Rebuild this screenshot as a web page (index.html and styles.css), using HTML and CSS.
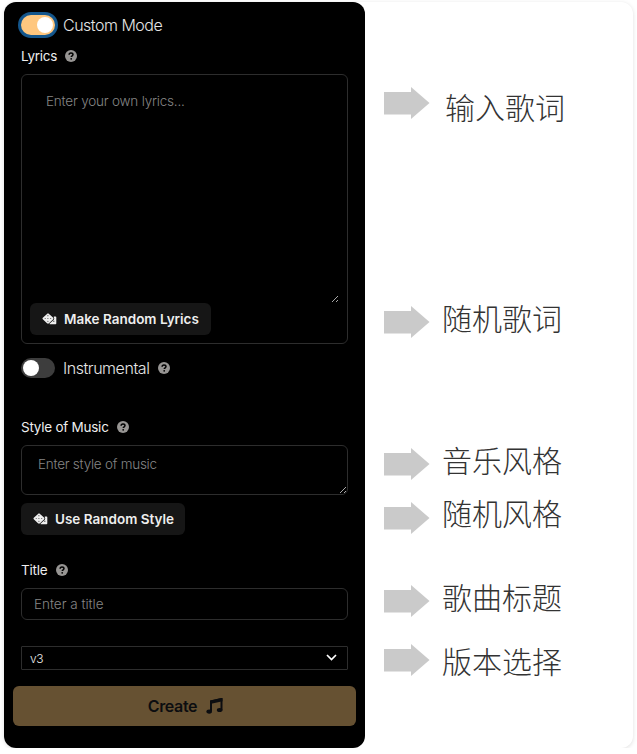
FILE: index.html
```html
<!DOCTYPE html>
<html lang="zh-CN">
<head>
<meta charset="utf-8">
<title>Custom Mode</title>
<link rel="stylesheet" href="styles.css">
</head>
<body>
<svg width="0" height="0" class="defs">
  <symbol id="help" viewBox="0 0 12 12"><circle cx="6" cy="6" r="6" fill="#979593"/><path d="M4.1 4.7C4.1 3.4 5 2.9 6 2.9c1.200 0 2 .7 2 1.700C8 5.800 6.200 5.800 6.200 7.100" fill="none" stroke="#000" stroke-width="1.500"/><circle cx="6.200" cy="8.800" r=".9"/></symbol>
  <symbol id="dice" viewBox="0 0 15 12"><path d="M5.300.7Q6 0 6.700.7L11 4.500Q12 5.500 11 6.500L7 10.300Q6 11.200 5 10.300L.8 6.300Q0 5.500.8 4.700z" fill="#eee"/><path d="M11.800 3.500H13.500Q14.300 3.500 14.300 4.300V10.500Q14.300 11.300 13.500 11.300H8.300Q7.500 11.300 7.500 10.700L11.800 6.700Q12.800 5.500 11.800 4.500z" fill="#eee"/><g fill="#555"><circle cx="5.900" cy="2.700" r=".6"/><circle cx="3.200" cy="5.500" r=".6"/><circle cx="5.900" cy="5.500" r=".6"/><circle cx="8.700" cy="5.500" r=".6"/><circle cx="5.900" cy="8.300" r=".6"/><circle cx="11.800" cy="8.300" r=".7"/></g></symbol>
  <symbol id="arrow" viewBox="0 0 46 32"><path d="M0 5h27V0l18.500 16L27 32v-4.500H0z" fill="#cacaca"/></symbol>
  <symbol id="grip" viewBox="0 0 8 8"><path d="M1 7 7 1M5 7l2-2" stroke="#bbb" stroke-width=".9"/></symbol>
</svg>
<main class="card">
  <section class="panel">
    <div class="switch-row">
      <span class="switch switch-on"><i></i></span><span class="mode t-custom">Custom Mode</span>
    </div>
    <div class="label label-lyrics"><span class="t-lyrics">Lyrics</span><svg class="help"><use href="#help"/></svg></div>
    <div class="lyrics-box">
      <div class="lyrics-input"><span class="t-enter">Enter your own lyrics...</span><svg class="grip"><use href="#grip"/></svg></div>
      <div class="random random-lyrics"><svg class="dice"><use href="#dice"/></svg><span class="t-make">Make Random Lyrics</span></div>
    </div>
    <div class="switch-row instrumental">
      <span class="switch"><i></i></span><span class="mode t-instrumental">Instrumental</span><svg class="help"><use href="#help"/></svg>
    </div>
    <div class="label label-style"><span class="t-style">Style of Music</span><svg class="help"><use href="#help"/></svg></div>
    <div class="style-input"><span class="t-enter-style">Enter style of music</span><svg class="grip"><use href="#grip"/></svg></div>
    <div class="random random-style"><svg class="dice"><use href="#dice"/></svg><span class="t-use">Use Random Style</span></div>
    <div class="label label-title"><span class="t-title">Title</span><svg class="help"><use href="#help"/></svg></div>
    <div class="title-input"><span class="t-enter-title">Enter a title</span></div>
    <div class="version"><span class="t-version">v3</span><svg width="11" height="7" viewBox="0 0 11 7"><path d="m1 1 4.500 4.500L10 1" fill="none" stroke="#fff" stroke-width="1.700"/></svg></div>
    <div class="create"><span class="t-create">Create</span><svg width="17" height="16" viewBox="0 0 17 16"><path d="M5 13V3.200L15.500 1v11.500" fill="none" stroke="#0c0d10" stroke-width="2"/><path d="M4 3.300Q4 2.600 4.800 2.400L15.500.1Q16.500 0 16.500.8V3.200L4 6z" fill="#0c0d10"/><ellipse cx="3.200" cy="13.600" rx="2.800" ry="2.100" fill="#0c0d10"/><ellipse cx="13.600" cy="12" rx="2.800" ry="2.100" fill="#0c0d10"/></svg></div>
  </section>
  <section class="notes">
    <div class="note n1"><svg class="arrow"><use href="#arrow"/></svg><span>输入歌词</span></div>
    <div class="note n2"><svg class="arrow"><use href="#arrow"/></svg><span>随机歌词</span></div>
    <div class="note n3"><svg class="arrow"><use href="#arrow"/></svg><span>音乐风格</span></div>
    <div class="note n4"><svg class="arrow"><use href="#arrow"/></svg><span>随机风格</span></div>
    <div class="note n5"><svg class="arrow"><use href="#arrow"/></svg><span>歌曲标题</span></div>
    <div class="note n6"><svg class="arrow"><use href="#arrow"/></svg><span>版本选择</span></div>
  </section>
</main>
</body>
</html>
```
FILE: styles.css
```css
* { box-sizing: border-box; }
body { margin: 0; background: #fff; font-family: Inter, "Liberation Sans", sans-serif; overflow: hidden; }
span { white-space: nowrap; }
svg { flex: none; }
.defs { position: absolute; }
.card { display: flex; width: 629px; height: 746px; margin: 2px 0 0 4px; border-radius: 12px; background: #fff; box-shadow: 0 1px 4px rgba(0,0,0,.13); }
.panel { width: 361px; height: 746px; padding: 12px 17px 0; background: #000; border-radius: 12px; color: #eee; font-size: 13.5px; }
.switch-row { display: flex; align-items: center; height: 22px; }
.switch { display: flex; align-items: center; width: 34px; height: 20px; padding: 0 2px; border-radius: 10px; background: #3d3d3d; margin-right: 8px; }
.switch i { width: 16px; height: 16px; border-radius: 50%; background: #fff; }
.switch-on { background: #ffc77f; justify-content: flex-end; padding-right: 2px; box-shadow: 0 0 0 3px #14568c; }
.mode { font-size: 16px; font-weight: 300; line-height: 22px; color: #e5e5e5; }
.t-custom { letter-spacing: -.5px; }
.t-instrumental { letter-spacing: -.45px; }
.t-lyrics, .t-title { letter-spacing: -.25px; }
.t-style { letter-spacing: -.25px; }
.t-enter { letter-spacing: -.2px; }
.t-enter-style { letter-spacing: -.25px; }
.t-make, .t-use { letter-spacing: 0; }
.t-enter-title { letter-spacing: -.02px; }
.t-version { letter-spacing: -.5px; }
.t-create { letter-spacing: -.35px; }
.help { width: 12px; height: 12px; }
.label { display: flex; align-items: center; height: 20px; line-height: 20px; }
.label .help { margin-left: 8px; }
.label-lyrics { margin-top: 10px; }
.lyrics-box { height: 270px; margin-top: 8px; padding: 8px; border: 1px solid #2d2d2d; border-radius: 6px; }
.lyrics-input { display: flex; justify-content: space-between; height: 220px; padding: 8px 0 0 16px; color: #858585; font-weight: 300; line-height: 20px; }
.grip { width: 8px; height: 8px; align-self: flex-end; }
.random { display: flex; align-items: center; height: 32px; padding-left: 12px; border-radius: 6px; background: #161616; font-weight: 600; }
.dice { width: 15px; height: 12px; margin-right: 7px; }
.random-lyrics { width: 181px; }
.random-style { width: 164px; margin-top: 8px; }
.instrumental { margin-top: 13px; }
.instrumental .help { margin-left: 9px; }
.label-style { margin-top: 38px; }
.style-input { display: flex; justify-content: space-between; height: 50px; margin-top: 8px; padding: 8px 0 0 16px; border: 1px solid #2d2d2d; border-radius: 6px; color: #858585; font-weight: 300; line-height: 20px; }
.label-title { margin-top: 25px; }
.label-title .help { margin-left: 9px; }
.title-input { display: flex; align-items: center; height: 32px; margin-top: 8px; padding-left: 12px; border: 1px solid #2d2d2d; border-radius: 6px; color: #858585; font-weight: 300; }
.version { display: flex; align-items: center; justify-content: space-between; height: 24px; margin-top: 26px; padding: 0 10px 0 8px; border: 1px solid #2d2d2d; border-radius: 1px; font-size: 12px; font-weight: 300; }
.version svg { margin-bottom: 2px; }
.create { display: flex; align-items: center; justify-content: center; gap: 9px; height: 40px; margin: 16px -8px 0; padding-left: 2px; border-radius: 6px; background: #665132; color: #0c0d10; font-size: 16px; font-weight: 600; }
.notes { flex: 1; padding-left: 19px; }
.note { display: flex; align-items: flex-start; height: 32px; color: #333; font-family: "Noto Sans CJK SC", sans-serif; font-size: 30px; font-weight: 300; line-height: 32px; }
.arrow { width: 46px; height: 32px; margin-right: 12px; }
.n1 { margin-top: 85px; }
.n1 span { margin: 3px 0 0 3px; }
.n2 { margin-top: 187px; }
.n2 span, .n5 span { margin-top: -5px; }
.n3 { margin-top: 110px; }
.n3 span { margin-top: -5px; }
.n4 span { margin-top: -6px; }
.n4 { margin-top: 22px; }
.n5 { margin-top: 51px; }
.n6 { margin-top: 27px; }
.n6 span { margin-top: 0; }
```
